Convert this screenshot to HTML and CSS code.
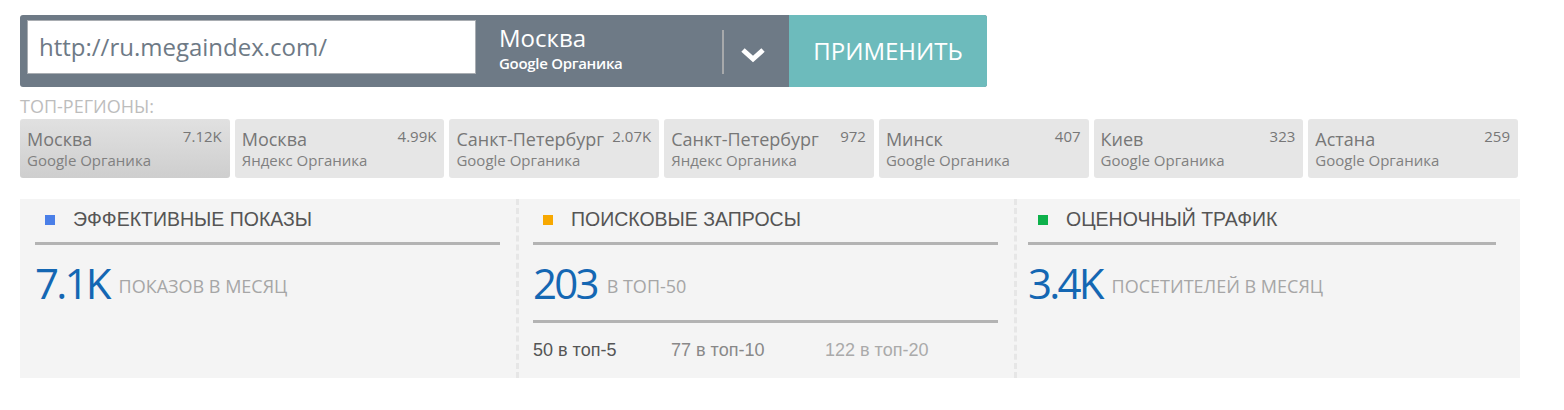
FILE: index.html
```html
<!DOCTYPE html>
<html lang="ru">
<head>
<meta charset="utf-8">
<title>MegaIndex</title>
<link rel="stylesheet" href="styles.css">
</head>
<body>
<div class="page">
  <div class="searchbar">
    <div class="url-wrap">
      <input class="url-input" type="text" value="http://ru.megaindex.com/">
    </div>
    <div class="region-select">
      <div class="region-text">
        <div class="region-name">Москва</div>
        <div class="region-sub">Google Органика</div>
      </div>
      <div class="region-sep"></div>
      <div class="region-toggle">
        <svg width="26" height="18" viewBox="0 0 26 18"><path d="M3 5 L13 14 L23 5" fill="none" stroke="#fff" stroke-width="5" stroke-linejoin="miter"/></svg>
      </div>
    </div>
    <button class="apply">ПРИМЕНИТЬ</button>
  </div>

  <div class="top-label">ТОП-РЕГИОНЫ:</div>
  <div class="regions">
    <div class="rcard active"><div class="rc-top"><span class="rc-name">Москва</span><span class="rc-num">7.12K</span></div><div class="rc-sub">Google Органика</div></div>
    <div class="rcard"><div class="rc-top"><span class="rc-name">Москва</span><span class="rc-num">4.99K</span></div><div class="rc-sub">Яндекс Органика</div></div>
    <div class="rcard"><div class="rc-top"><span class="rc-name">Санкт-Петербург</span><span class="rc-num">2.07K</span></div><div class="rc-sub">Google Органика</div></div>
    <div class="rcard"><div class="rc-top"><span class="rc-name">Санкт-Петербург</span><span class="rc-num">972</span></div><div class="rc-sub">Яндекс Органика</div></div>
    <div class="rcard"><div class="rc-top"><span class="rc-name">Минск</span><span class="rc-num">407</span></div><div class="rc-sub">Google Органика</div></div>
    <div class="rcard"><div class="rc-top"><span class="rc-name">Киев</span><span class="rc-num">323</span></div><div class="rc-sub">Google Органика</div></div>
    <div class="rcard"><div class="rc-top"><span class="rc-name">Астана</span><span class="rc-num">259</span></div><div class="rc-sub">Google Органика</div></div>
  </div>

  <div class="stats">
    <div class="col col1">
      <div class="col-head"><span class="sq blue"></span><span class="col-title">ЭФФЕКТИВНЫЕ ПОКАЗЫ</span></div>
      <div class="big-row"><span class="big">7.1K</span><span class="big-label">ПОКАЗОВ В МЕСЯЦ</span></div>
    </div>
    <div class="col col2">
      <div class="col-head"><span class="sq orange"></span><span class="col-title">ПОИСКОВЫЕ ЗАПРОСЫ</span></div>
      <div class="big-row"><span class="big">203</span><span class="big-label">В ТОП-50</span></div>
      <div class="subs">
        <span class="s1">50 в топ-5</span>
        <span class="s2">77 в топ-10</span>
        <span class="s3">122 в топ-20</span>
      </div>
    </div>
    <div class="col col3">
      <div class="col-head"><span class="sq green"></span><span class="col-title">ОЦЕНОЧНЫЙ ТРАФИК</span></div>
      <div class="big-row"><span class="big">3.4K</span><span class="big-label">ПОСЕТИТЕЛЕЙ В МЕСЯЦ</span></div>
    </div>
  </div>
</div>
</body>
</html>
```

FILE: styles.css
```css
* { box-sizing: border-box; }
body {
  margin: 0;
  background: #fff;
  font-family: "Open Sans", "Liberation Sans", sans-serif;
}
.page {
  padding: 15px 20px;
}
.searchbar {
  display: flex;
  width: 967px;
  height: 72px;
  background: #6e7a86;
  border-radius: 3px;
}
.url-wrap {
  padding: 5px 0 0 7px;
}
.url-input {
  width: 449px;
  height: 54px;
  border: 1px solid #a9adb2;
  background: #fff;
  padding: 0 11px 2px;
  font-family: "Open Sans", sans-serif;
  font-size: 24px;
  color: #6e7a86;
  outline: none;
}
.region-select {
  flex: 1;
  display: flex;
  align-items: flex-start;
}
.region-text {
  flex: 1;
  padding: 8px 0 0 23px;
  color: #fff;
}
.region-name {
  font-size: 24px;
  line-height: 30px;
}
.region-sub {
  font-size: 15px;
  line-height: 20px;
  font-weight: 600;
  letter-spacing: -0.3px;
}
.region-sep {
  width: 2px;
  height: 44px;
  margin-top: 15px;
  background: #a7a9ab;
}
.region-toggle {
  width: 65px;
  height: 72px;
  display: flex;
  align-items: center;
  padding: 6px 0 0 16px;
}
.apply {
  width: 198px;
  height: 72px;
  border: none;
  background: #6dbbbc;
  color: #fff;
  font-family: "Open Sans", sans-serif;
  font-size: 24px;
  border-radius: 0 3px 3px 0;
  padding: 0 0 2px;
}
.top-label {
  margin: 10px 0 4px;
  font-size: 18px;
  line-height: 18px;
  color: #bdbdbd;
}
.regions {
  display: flex;
  gap: 5px;
  width: 1498px;
}
.rcard {
  flex: 1;
  height: 59px;
  background: #e6e6e6;
  border-radius: 3px;
  padding: 8px 8px 0 7px;
  color: #777;
}
.rcard.active {
  background: linear-gradient(#e1e1e1, #cecece);
}
.rc-top {
  display: flex;
  justify-content: space-between;
  align-items: flex-start;
}
.rc-name {
  font-size: 18px;
  line-height: 24px;
  color: #777;
}
.rc-num {
  font-size: 15px;
  line-height: 16px;
  margin-top: 1px;
  color: #777;
}
.rc-sub {
  font-size: 15px;
  line-height: 19px;
  color: #808080;
}
.stats {
  margin-top: 21px;
  width: 1500px;
  height: 179px;
  background: #f4f4f4;
  display: grid;
  grid-template-columns: 496px 498px 1fr;
}
.col {
  padding: 0 16px 0 15px;
}
.col2, .col3 {
  border-left: 3px dashed #e6e6e6;
}
.col2 { padding-left: 14px; }
.col3 { padding-left: 11px; padding-right: 24px; }
.col-head {
  display: flex;
  align-items: center;
  height: 46px;
  padding-bottom: 2px;
  border-bottom: 3px solid #b3b3b3;
}
.sq {
  width: 10px;
  height: 10px;
  margin: 0 18px 0 10px;
}
.blue { background: #4a7fe8; }
.orange { background: #f7a800; }
.green { background: #0db14b; }
.col-title {
  font-family: "Liberation Sans", Arial, sans-serif;
  font-size: 19.5px;
  color: #555;
}
.big-row {
  height: 78px;
  padding-top: 13px;
  line-height: 50px;
  white-space: nowrap;
  border-bottom: 3px solid transparent;
}
.col2 .big-row { border-bottom-color: #b3b3b3; }
.big {
  font-size: 42px;
  font-weight: 500;
  color: #1467b3;
  letter-spacing: -2.8px;
  margin-right: 10px;
}
.big-label {
  font-size: 18px;
  color: #a6a6a6;
  vertical-align: 6px;
}
.subs {
  display: flex;
  padding-top: 17px;
  font-family: "Liberation Sans", Arial, sans-serif;
  font-size: 18px;
}
.s1 { color: #555; width: 138px; }
.s2 { color: #888; width: 154px; }
.s3 { color: #aaa; }
```
